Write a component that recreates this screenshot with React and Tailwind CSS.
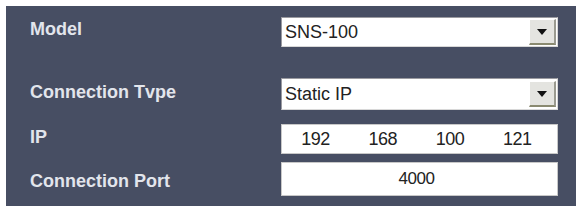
import React from "react";

function DropButton() {
  return (
    <div className="flex items-center justify-center w-[27px] h-[26px] bg-[#e4e4e0] border-t border-l border-t-white border-l-white border-b-2 border-r-2 border-b-[#8a8a70] border-r-[#9a9a90]">
      <svg width="10" height="6" viewBox="0 0 10 6">
        <polygon points="0,0 10,0 5,6" fill="#111" />
      </svg>
    </div>
  );
}

function SelectBox({ value, height }) {
  return (
    <div
      className={`flex items-center justify-between bg-white border border-t-[#9a9aa0] border-l-[#9a9aa0] border-b-[#d8d8d8] border-r-[#d8d8d8] pl-[3px] pr-[1px] ${height}`}
    >
      <span className="text-[18px] text-[#222]">{value}</span>
      <DropButton />
    </div>
  );
}

function App() {
  const ip = ["192", "168", "100", "121"];

  return (
    <div className="w-[579px] h-[209px] bg-white pt-[6px] pl-[6px] font-['Liberation_Sans',Arial,sans-serif]">
      <div className="w-[570px] h-[200px] bg-[#474e63] pt-[11px] pl-[24px] pr-[18px]">
        {/* Model */}
        <div className="flex items-start">
          <div className="w-[251px] -mt-[1px] text-[18px] font-bold text-[#e2e5ec]">
            Model
          </div>
          <div className="flex-1">
            <SelectBox value="SNS-100" height="h-[30px]" />
          </div>
        </div>

        {/* Connection Type */}
        <div className="flex items-center mt-[31px]">
          <div className="w-[251px] -mt-[4px] text-[18px] font-bold text-[#e2e5ec]">
            Connection Tvpe
          </div>
          <div className="flex-1">
            <SelectBox value="Static IP" height="h-[32px]" />
          </div>
        </div>

        {/* IP */}
        <div className="flex items-center mt-[14px]">
          <div className="w-[251px] -mt-[4px] text-[18px] font-bold text-[#e2e5ec]">
            IP
          </div>
          <div className="flex-1 h-[30px] bg-white border border-[#c8c8c8] grid grid-cols-4 items-center pr-[6px]">
            {ip.map((n) => (
              <span key={n} className="text-center text-[18px] text-[#222] tracking-[-0.5px]">
                {n}
              </span>
            ))}
          </div>
        </div>

        {/* Connection Port */}
        <div className="flex items-center mt-[8px]">
          <div className="w-[251px] mt-[4px] text-[18px] font-bold text-[#e2e5ec]">
            Connection Port
          </div>
          <div className="flex-1 h-[34px] bg-white border border-[#c8c8c8] flex items-center justify-center">
            <span className="text-[17px] text-[#222] tracking-[-0.5px] -ml-[6px]">4000</span>
          </div>
        </div>
      </div>
    </div>
  );
}

export default App;
